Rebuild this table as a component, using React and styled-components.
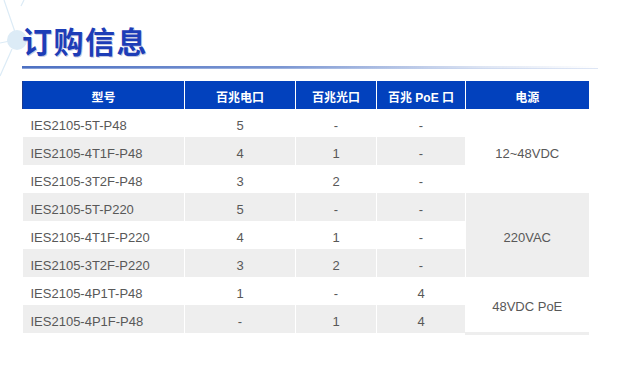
import React from 'react'
import styled, { createGlobalStyle } from 'styled-components'

const rows = [
  { model: 'IES2105-5T-P48', tp: '5', fx: '-', poe: '-', power: '12~48VDC', span: 3 },
  { model: 'IES2105-4T1F-P48', tp: '4', fx: '1', poe: '-' },
  { model: 'IES2105-3T2F-P48', tp: '3', fx: '2', poe: '-' },
  { model: 'IES2105-5T-P220', tp: '5', fx: '-', poe: '-', power: '220VAC', span: 3 },
  { model: 'IES2105-4T1F-P220', tp: '4', fx: '1', poe: '-' },
  { model: 'IES2105-3T2F-P220', tp: '3', fx: '2', poe: '-' },
  { model: 'IES2105-4P1T-P48', tp: '1', fx: '-', poe: '4', power: '48VDC PoE', span: 2, last: true },
  { model: 'IES2105-4P1F-P48', tp: '-', fx: '1', poe: '4' },
]

const GlobalStyle = createGlobalStyle`
  body {
    margin: 0;
    background: #fff;
    font-family: "Liberation Sans", Arial, "Noto Sans CJK SC", sans-serif;
  }
`

const Page = styled.div`
  position: relative;
  width: 624px;
  height: 376px;
  padding: 20px 0 0 22px;
  box-sizing: border-box;
  overflow: hidden;
`

const Deco = styled.svg`
  position: absolute;
  left: 0;
  top: 0;
`

const Title = styled.h1`
  position: relative;
  margin: 0;
  font-family: "Noto Sans CJK SC", sans-serif;
  font-size: 30px;
  font-weight: 700;
  line-height: 40px;
  letter-spacing: 1.5px;
  color: #1d3db7;
  text-shadow: 1px 1px 0 rgba(20, 40, 140, 0.25);
`

const Rule = styled.div`
  height: 2px;
  width: 576px;
  margin: 6px 0 12px;
  background: linear-gradient(to right, #4d70c2 0%, #7b96d2 45%, rgba(200, 212, 236, 0.6) 80%, rgba(255, 255, 255, 0) 100%);
  border-bottom: 1px solid rgba(190, 205, 235, 0.5);
`

const Table = styled.table`
  border-collapse: collapse;
  table-layout: fixed;
  width: 566px;
  font-size: 13px;
  color: #585858;
`

const Th = styled.th`
  height: 28px;
  padding: 3px 0 0;
  box-sizing: border-box;
  background: #0241bd;
  color: #fff;
  font-family: "Liberation Sans", Arial, "Noto Sans CJK SC", sans-serif;
  font-size: 12px;
  font-weight: 700;
  border-left: 1px solid #fff;
  &:first-child {
    border-left: 1px solid #1a3a90;
  }
`

const Tr = styled.tr`
  background: ${(p) => (p.$odd ? '#eeeeee' : '#fff')};
`

const Td = styled.td`
  height: 28px;
  padding: 5px 0 0;
  box-sizing: border-box;
  text-align: ${(p) => (p.$left ? 'left' : 'center')};
  padding-left: ${(p) => (p.$left ? '8px' : '0')};
  border-left: 1px solid #fff;
  vertical-align: middle;
  &:first-child {
    border-left: none;
  }
`

const PowerTd = styled(Td)`
  border-bottom: ${(p) => (p.$last ? '3px solid #eeeeee' : 'none')};
`

export default function App() {
  return (
    <Page>
      <GlobalStyle />
      <Deco width="40" height="90" viewBox="0 0 40 90">
        <g stroke="#dcebf6" strokeWidth="1.2" fill="none">
          <line x1="4" y1="0" x2="15" y2="32" />
          <line x1="0" y1="43" x2="10" y2="41" />
          <line x1="12" y1="49" x2="0" y2="76" />
          <line x1="24" y1="0" x2="21" y2="6" />
        </g>
        <circle cx="17" cy="40" r="10" fill="#dcebf6" />
      </Deco>
      <Title>订购信息</Title>
      <Rule />
      <Table>
        <colgroup>
          <col style={{ width: 162 }} />
          <col style={{ width: 111 }} />
          <col style={{ width: 81 }} />
          <col style={{ width: 89 }} />
          <col style={{ width: 123 }} />
        </colgroup>
        <thead>
          <tr>
            <Th>型号</Th>
            <Th>百兆电口</Th>
            <Th>百兆光口</Th>
            <Th>百兆 PoE 口</Th>
            <Th>电源</Th>
          </tr>
        </thead>
        <tbody>
          {rows.map((r, i) => (
            <Tr key={r.model} $odd={i % 2 === 1}>
              <Td $left>{r.model}</Td>
              <Td>{r.tp}</Td>
              <Td>{r.fx}</Td>
              <Td>{r.poe}</Td>
              {r.power && (
                <PowerTd rowSpan={r.span} $last={r.last}>
                  {r.power}
                </PowerTd>
              )}
            </Tr>
          ))}
        </tbody>
      </Table>
    </Page>
  )
}
